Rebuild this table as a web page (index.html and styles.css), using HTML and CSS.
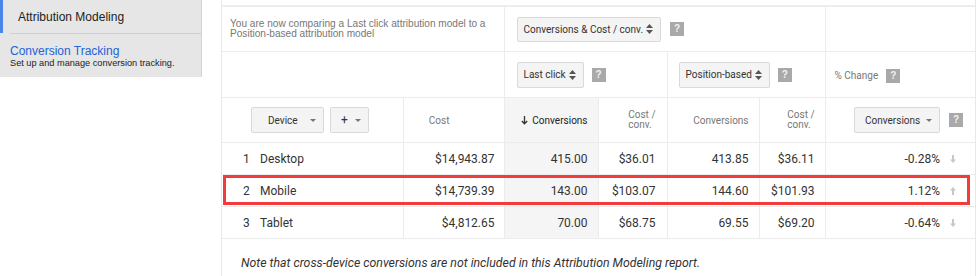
FILE: index.html
```html
<!DOCTYPE html>
<html>
<head>
<meta charset="utf-8">
<link rel="stylesheet" href="styles.css">
</head>
<body>
<div class="page">
  <nav class="sidebar">
    <div class="nav-item active">Attribution Modeling</div>
    <div class="nav-divider"></div>
    <div class="nav-item sub">
      <div class="nav-title">Conversion Tracking</div>
      <div class="nav-desc">Set up and manage conversion tracking.</div>
    </div>
  </nav>

  <div class="report">
    <table class="grid">
      <colgroup>
        <col class="c-a"><col class="c-b"><col class="c-c"><col class="c-d"><col class="c-e"><col class="c-f"><col class="c-g">
      </colgroup>
      <tr class="r-intro">
        <td colspan="2" class="intro">You are now comparing a Last click attribution model to a<br>Position-based attribution model</td>
        <td colspan="4" class="ctl"><span class="select sel-sm">Conversions &amp; Cost / conv.<svg class="updown" width="7" height="10" viewBox="0 0 7 10"><path d="M3.5 0L7 4H0z M0 6h7L3.5 10z" fill="#555"/></svg></span><span class="help">?</span></td>
        <td></td>
      </tr>
      <tr class="r-models">
        <td colspan="2"></td>
        <td colspan="2" class="ctl"><span class="select">Last click<svg class="updown" width="7" height="10" viewBox="0 0 7 10"><path d="M3.5 0L7 4H0z M0 6h7L3.5 10z" fill="#555"/></svg></span><span class="help">?</span></td>
        <td colspan="2" class="ctl ctl-e"><span class="select">Position-based<svg class="updown" width="7" height="10" viewBox="0 0 7 10"><path d="M3.5 0L7 4H0z M0 6h7L3.5 10z" fill="#555"/></svg></span><span class="help">?</span></td>
        <td class="ctl ctl-g"><span class="pct-label">% Change</span><span class="help">?</span></td>
      </tr>
      <tr class="r-head">
        <td class="h-seg"><span class="select dd dd-device">Device<svg class="caret" width="6" height="3" viewBox="0 0 6 3"><path d="M0 0h6L3 3z" fill="#777"/></svg></span><span class="select dd dd-plus">+<svg class="caret" width="6" height="3" viewBox="0 0 6 3"><path d="M0 0h6L3 3z" fill="#777"/></svg></span></td>
        <td class="h num h-cost">Cost</td>
        <td class="h num sorted shade"><svg class="sort" width="7" height="9" viewBox="0 0 7 9"><path d="M3.5 0v7.5M0.8 5l2.7 2.8L6.2 5" stroke="#333" stroke-width="1.3" fill="none"/></svg>Conversions</td>
        <td class="h num h-d"><span class="two">Cost /<br>conv.</span></td>
        <td class="h num">Conversions</td>
        <td class="h num"><span class="two">Cost /<br>conv.</span></td>
        <td class="h num h-g"><span class="select dd dd-conv">Conversions<svg class="caret" width="6" height="3" viewBox="0 0 6 3"><path d="M0 0h6L3 3z" fill="#777"/></svg></span><span class="help">?</span></td>
      </tr>
      <tr class="r-data">
        <td class="seg"><span class="idx">1</span>Desktop</td>
        <td class="num d-b">$14,943.87</td>
        <td class="num shade">415.00</td>
        <td class="num d-d">$36.01</td>
        <td class="num">413.85</td>
        <td class="num">$36.11</td>
        <td class="num d-g">-0.28%<span class="trend"><svg width="6" height="8" viewBox="0 0 6 8"><path d="M2 0h2v4.5h2L3 8 0 4.5h2z" fill="#c8c8c8"/></svg></span></td>
      </tr>
      <tr class="r-data">
        <td class="seg"><span class="idx">2</span>Mobile</td>
        <td class="num d-b">$14,739.39</td>
        <td class="num shade">143.00</td>
        <td class="num d-d">$103.07</td>
        <td class="num">144.60</td>
        <td class="num">$101.93</td>
        <td class="num d-g">1.12%<span class="trend"><svg width="6" height="8" viewBox="0 0 6 8"><path d="M2 8h2V3.5h2L3 0 0 3.5h2z" fill="#c8c8c8"/></svg></span></td>
      </tr>
      <tr class="r-data">
        <td class="seg"><span class="idx">3</span>Tablet</td>
        <td class="num d-b">$4,812.65</td>
        <td class="num shade">70.00</td>
        <td class="num d-d">$68.75</td>
        <td class="num">69.55</td>
        <td class="num">$69.20</td>
        <td class="num d-g">-0.64%<span class="trend"><svg width="6" height="8" viewBox="0 0 6 8"><path d="M2 0h2v4.5h2L3 8 0 4.5h2z" fill="#c8c8c8"/></svg></span></td>
      </tr>
      <tr class="r-note">
        <td colspan="7" class="note">Note that cross-device conversions are not included in this Attribution Modeling report.</td>
      </tr>
    </table>
    <div class="highlight"></div>
  </div>
</div>
</body>
</html>
```

FILE: styles.css
```css
* { box-sizing: border-box; }

body {
  margin: 0;
  width: 976px;
  height: 276px;
  overflow: hidden;
  background: #fff;
  font-family: Roboto, "Liberation Sans", Arial, sans-serif;
  color: #333;
}

.page {
  display: flex;
  align-items: flex-start;
}

/* ---------- sidebar ---------- */
.sidebar {
  flex: none;
  width: 202px;
  height: 77px;
  background: #e6e6e6;
  border-right: 1px solid #d4d4d4;
  font-family: "Liberation Sans", Arial, sans-serif;
}

.nav-item.active {
  height: 33px;
  border-left: 3px solid #4a86e8;
  padding-left: 15px;
  display: flex;
  align-items: center;
  font-size: 12px;
  color: #222;
}

.nav-divider {
  height: 1px;
  margin-left: 10px;
  background: #cfcfcf;
}

.nav-item.sub {
  padding: 10px 0 0 10px;
}

.nav-title {
  font-size: 12px;
  line-height: 14px;
  color: #2563d6;
}

.nav-desc {
  font-size: 9.2px;
  line-height: 11px;
  color: #222;
}

/* ---------- report ---------- */
.report {
  position: relative;
  flex: none;
  margin-left: 19px;
  width: 755px;
  height: 276px;
  overflow: hidden;
  padding-top: 5px;
  border-left: 1px solid #e8e8e8;
  border-right: 1px solid #e8e8e8;
}

.grid {
  width: 753px;
  border-collapse: collapse;
  table-layout: fixed;
  border-top: 2px solid #ededed;
}

.c-a { width: 181px; }
.c-b { width: 101px; }
.c-c { width: 94px; }
.c-d { width: 69px; }
.c-e { width: 92px; }
.c-f { width: 66px; }
.c-g { width: 150px; }

.grid td {
  box-sizing: content-box;
  padding: 0;
  vertical-align: middle;
  border-bottom: 1px solid #ececec;
  border-right: 1px solid #ececec;
  white-space: nowrap;
}

.grid td:last-child { border-right: none; }

.r-intro td { height: 44px; }
.r-models td { height: 45px; }
.r-head td { height: 44px; }
.r-data td { height: 31px; }
.r-note td { border-bottom: none; }

.intro {
  padding-left: 8px !important;
  font-family: "Liberation Sans", Arial, sans-serif;
  font-size: 10.1px;
  line-height: 10px;
  color: #777;
}

.ctl { padding-left: 12px !important; }
.ctl-e { padding-left: 11px !important; }
.ctl-g { padding-left: 9px !important; }

.select {
  display: inline-flex;
  align-items: center;
  vertical-align: middle;
  height: 26px;
  padding: 0 7px 0 6px;
  background: #f4f4f4;
  border: 1px solid #d9d9d9;
  border-radius: 2px;
  font-size: 10px;
  color: #333;
}

.sel-sm { height: 25px; }

.updown { margin-left: 3px; }

.help {
  display: inline-block;
  vertical-align: middle;
  width: 14px;
  height: 14px;
  margin-left: 8px;
  background: #a9a9a9;
  color: #f2f2f2;
  font: bold 10px/14px "Liberation Sans", Arial, sans-serif;
  text-align: center;
}

.sel-sm + .help { margin-left: 9px; }

.pct-label {
  vertical-align: middle;
  font-size: 10px;
  color: #777;
}

/* header row */
.h {
  font-size: 10px;
  color: #777;
}

.h-seg { padding-left: 29px !important; }

.dd { padding: 0 7px 0 16px; }
.dd-device { width: 73px; justify-content: space-between; }
.dd-plus { width: 39px; margin-left: 6px; padding-left: 10px; justify-content: space-between; font-size: 12px; }
.dd-conv { width: 86px; padding-left: 10px; justify-content: space-between; }

.num { text-align: right; padding-right: 10px !important; }
.h-cost { padding-right: 54px !important; }
.h-d, .d-d { padding-right: 11px !important; }
.h-g { padding-right: 12px !important; }
.h-g .help { margin-left: 9px; }

.sorted { color: #222; }
.sort { margin-right: 4px; vertical-align: -1px; }

.two {
  display: inline-block;
  text-align: left;
  line-height: 10px;
  vertical-align: middle;
}

.shade { background: #f5f5f5; }

/* data rows */
.r-data td { font-size: 12px; color: #333; }

.seg { padding-left: 21px !important; }
.idx { display: inline-block; width: 17px; }

.d-b { padding-right: 9px !important; }
.d-g { padding-right: 12px !important; }

.trend {
  display: inline-block;
  width: 23px;
  padding-left: 10px;
  text-align: left;
}

.trend svg { vertical-align: 0; }

.note {
  padding: 17px 0 0 19px !important;
  vertical-align: top !important;
  height: 20px;
  font-size: 12.3px;
  line-height: 15px;
  font-style: italic;
  color: #333;
}

.highlight {
  position: absolute;
  left: 1px;
  top: 175px;
  width: 747px;
  height: 30px;
  border: 3px solid #f23c3c;
}
```
